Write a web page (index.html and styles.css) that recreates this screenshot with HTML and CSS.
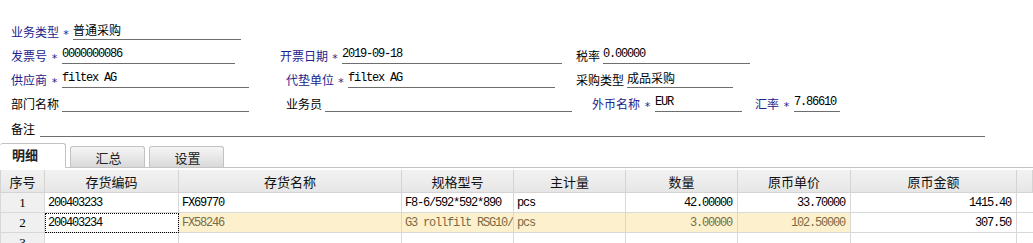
FILE: index.html
```html
<!DOCTYPE html>
<html lang="zh-CN">
<head>
    <meta charset="UTF-8">
    <title>采购发票</title>
    <link rel="stylesheet" href="styles.css">
</head>
<body>

    <!-- 表头 -->
    <div class="head">
        <div class="row">
            <div class="fld"><span class="lbl req w62">业务类型<i>*</i></span><span class="val cn w168">普通采购</span></div>
        </div>
        <div class="row">
            <div class="fld"><span class="lbl req w51">发票号<i>*</i></span><span class="val w173">0000000086</span></div>
            <div class="fld m45"><span class="lbl req w62">开票日期<i>*</i></span><span class="val w220">2019-09-18</span></div>
            <div class="fld m14"><span class="lbl w27">税率</span><span class="val w147">0.00000</span></div>
        </div>
        <div class="row">
            <div class="fld"><span class="lbl req w51">供应商<i>*</i></span><span class="val w187">filtex AG</span></div>
            <div class="fld m37"><span class="lbl req w62">代垫单位<i>*</i></span><span class="val w207">filtex AG</span></div>
            <div class="fld m21"><span class="lbl w51">采购类型</span><span class="val cn w106">成品采购</span></div>
        </div>
        <div class="row">
            <div class="fld"><span class="lbl w51">部门名称</span><span class="val w187"></span></div>
            <div class="fld m37"><span class="lbl w39">业务员</span><span class="val w247"></span></div>
            <div class="fld m20"><span class="lbl req w63">外币名称<i>*</i></span><span class="val w87">EUR</span></div>
            <div class="fld m13"><span class="lbl req w39">汇率<i>*</i></span><span class="val w46">7.86610</span></div>
        </div>
        <div class="row last">
            <div class="fld"><span class="lbl w29">备注</span><span class="val w945"></span></div>
        </div>
    </div>

    <!-- 页签 -->
    <div class="tabs">
        <div class="tab active">明细</div>
        <div class="tab">汇总</div>
        <div class="tab">设置</div>
    </div>

    <!-- 明细表 -->
    <table class="grid">
        <colgroup>
            <col class="c-no"><col class="c-code"><col class="c-name"><col class="c-spec">
            <col class="c-unit"><col class="c-qty"><col class="c-price"><col class="c-sum"><col>
        </colgroup>
        <thead>
            <tr>
                <th>序号</th><th>存货编码</th><th>存货名称</th><th>规格型号</th>
                <th>主计量</th><th>数量</th><th>原币单价</th><th>原币金额</th><th></th>
            </tr>
        </thead>
        <tbody>
            <tr>
                <td class="no">1</td>
                <td>200403233</td>
                <td>FX69770</td>
                <td>F8-6/592*592*890</td>
                <td>pcs</td>
                <td class="num">42.00000</td>
                <td class="num">33.70000</td>
                <td class="num">1415.40</td>
                <td class="blank"></td>
            </tr>
            <tr>
                <td class="no">2</td>
                <td class="focus">200403234</td>
                <td class="hl">FX58246</td>
                <td class="hl">G3 rollfilt RSG10/</td>
                <td class="hl">pcs</td>
                <td class="hl num">3.00000</td>
                <td class="hl num">102.50000</td>
                <td class="num">307.50</td>
                <td class="blank"></td>
            </tr>
            <tr>
                <td class="no">3</td>
                <td></td><td></td><td></td><td></td><td></td><td></td><td></td>
                <td class="blank"></td>
            </tr>
        </tbody>
    </table>

</body>
</html>
```

FILE: styles.css
```css
body {
    margin: 0;
    background-color: #ffffff;
    color: #000000;
    font-family: "Noto Sans CJK SC", sans-serif;
    font-size: 12px;
    overflow: hidden;
}

/* 表头字段 */
.head {
    padding: 16px 0 0 11px;
}

.row {
    display: flex;
    align-items: flex-end;
    height: 24px;
}

.row.last {
    height: 26px;
    margin-top: -1px;
}

.fld {
    display: flex;
    align-items: flex-end;
}

.lbl {
    flex: none;
    display: flex;
    align-items: center;
    height: 18px;
    white-space: nowrap;
    color: #000000;
}

.lbl.req {
    color: #22228c;
}

.lbl i {
    flex: 1;
    text-align: center;
    font-style: normal;
    font-family: "DejaVu Sans", sans-serif;
    font-size: 11px;
    line-height: 11px;
    padding-top: 6px;
    color: #22228c;
}

.val {
    flex: none;
    height: 16px;
    line-height: 15px;
    border-bottom: 1px solid #6e6e6e;
    font-family: "Liberation Mono", monospace;
    font-size: 12px;
    letter-spacing: -1.2px;
    white-space: nowrap;
}

.val.cn {
    font-family: "Noto Sans CJK SC", sans-serif;
    font-size: 12px;
    letter-spacing: 0;
    line-height: 14px;
}

.w27 { width: 27px; }
.w29 { width: 29px; }
.w39 { width: 39px; }
.w46 { width: 46px; }
.w51 { width: 51px; }
.w62 { width: 62px; }
.w63 { width: 63px; }
.w87 { width: 87px; }
.w106 { width: 106px; }
.w147 { width: 147px; }
.w168 { width: 168px; }
.w173 { width: 173px; }
.w187 { width: 187px; }
.w207 { width: 207px; }
.w220 { width: 220px; }
.w247 { width: 247px; }
.w945 { width: 945px; }

.m13 { margin-left: 13px; }
.m14 { margin-left: 14px; }
.m20 { margin-left: 20px; }
.m21 { margin-left: 21px; }
.m37 { margin-left: 37px; }
.m45 { margin-left: 45px; }

/* 页签 */
.tabs {
    display: flex;
    align-items: flex-end;
    gap: 4px;
    height: 25px;
    margin-top: 5px;
    border-bottom: 1px solid #c4c4c4;
}

.tab {
    width: 75px;
    height: 21px;
    line-height: 21px;
    text-align: center;
    border: 1px solid #c2c2c2;
    border-bottom: none;
    border-radius: 3px 3px 0 0;
    background: linear-gradient(#f6f6f6, #d9d9d9);
    color: #222222;
    font-size: 13px;
    padding-left: 2px;
    box-sizing: border-box;
}

.tab.active {
    width: 66px;
    height: 25px;
    line-height: 22px;
    background: #ffffff;
    font-weight: bold;
    text-align: left;
    padding-left: 12px;
    border-left: none;
    margin-bottom: -1px;
}

/* 明细表 */
.grid {
    margin-top: 2px;
    width: 100%;
    border-collapse: collapse;
    table-layout: fixed;
}

.c-no { width: 44px; }
.c-code { width: 134px; }
.c-name { width: 223px; }
.c-spec { width: 112px; }
.c-unit { width: 112px; }
.c-qty { width: 112px; }
.c-price { width: 113px; }
.c-sum { width: 166px; }

.grid th {
    height: 22px;
    padding: 0;
    font-weight: normal;
    font-size: 13px;
    background: linear-gradient(#f2f2f2, #e6e6e6);
    border: 1px solid #d4d4d4;
    border-top: none;
    color: #111111;
}

.grid td {
    height: 19px;
    padding: 0 3px;
    border: 1px solid #d8d8d8;
    font-family: "Liberation Mono", monospace;
    font-size: 12px;
    letter-spacing: -1.2px;
    white-space: nowrap;
    overflow: hidden;
}

.grid td.no {
    background-color: #f0f0f0;
    text-align: center;
    font-family: "Liberation Serif", serif;
    font-size: 13px;
    letter-spacing: 0;
}

.grid td.num {
    text-align: right;
    padding-right: 5px;
}

.grid td.blank {
    border-right: none;
}

.grid td.hl {
    background-color: #fdf1cd;
    color: #7a6a45;
}

.grid td.focus {
    outline: 1px dotted #000000;
    outline-offset: -1px;
}
```
